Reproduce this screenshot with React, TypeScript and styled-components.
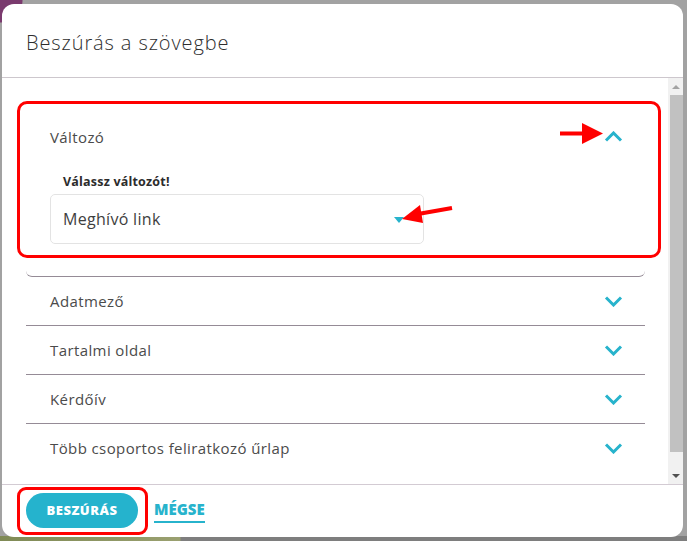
import React from "react";
import styled, { createGlobalStyle } from "styled-components";

const GlobalStyle = createGlobalStyle`
  html, body { margin: 0; padding: 0; }
  body { background: #a0a0a0; font-family: "Open Sans", "Liberation Sans", sans-serif; }
  * { box-sizing: border-box; }
`;

const TEAL = "#27b3cc";
const LINE = "#958b96";

const Backdrop = styled.div`
  width: 687px;
  height: 541px;
  padding: 4px 4px 4px 2px;
  background:
    radial-gradient(circle at 0 0, #7a3a6e 0 22px, transparent 23px),
    linear-gradient(to right, #7f8a55 0, #9aa070 180px, #7e7e7e 181px) bottom / 100% 5px no-repeat,
    #a2a2a2;
  overflow: hidden;
`;

const Modal = styled.div`
  width: 681px;
  height: 533px;
  background: #fff;
  border-radius: 12px;
  display: flex;
  flex-direction: column;
  overflow: hidden;
`;

const Header = styled.div`
  height: 74px;
  flex: none;
  display: flex;
  align-items: center;
  padding: 3px 0 0 24px;
  border-bottom: 1px solid #cdc7cd;
`;

const Title = styled.h2`
  margin: 0;
  font-size: 20px;
  font-weight: 300;
  color: #2e2e2e;
  letter-spacing: 0.9px;
`;

const Body = styled.div`
  flex: 1;
  display: flex;
  min-height: 0;
`;

const Content = styled.div`
  flex: 1;
  padding: 39px 23px 0 24px;
  display: flex;
  flex-direction: column;
`;

const Scrollbar = styled.div`
  width: 15px;
  flex: none;
  background: #f1f1f1;
  display: flex;
  flex-direction: column;
  align-items: flex-end;
`;

const ScrollArrow = styled.div<{ $down?: boolean }>`
  width: 15px;
  height: 17px;
  display: flex;
  align-items: center;
  justify-content: center;
  &::before {
    content: "";
    border-left: 4px solid transparent;
    border-right: 4px solid transparent;
    ${(p) =>
      p.$down
        ? `border-top: 4px solid #505050;`
        : `border-bottom: 4px solid #a3a3a3;`}
  }
`;

const Thumb = styled.div`
  width: 13px;
  height: 357px;
  background: #c1c1c1;
`;

const ScrollSpace = styled.div`
  flex: 1;
`;

const ExpandedItem = styled.div`
  position: relative;
  padding: 0 22px 32px 24px;
  border-bottom: 1px solid ${LINE};
  border-radius: 0 0 6px 6px;
`;

const Row = styled.div<{ $last?: boolean }>`
  height: 49px;
  display: flex;
  align-items: center;
  justify-content: space-between;
  padding: 0 22px 0 24px;
  border-bottom: 1px solid ${(p) => (p.$last ? "transparent" : LINE)};
`;

const ExpandedHead = styled.div`
  height: 59px;
  display: flex;
  align-items: center;
  justify-content: space-between;
  margin-top: -10px;
`;

const RowLabel = styled.span`
  font-size: 15px;
  font-weight: 400;
  color: #4b4b4b;
  letter-spacing: 0.4px;
`;

const FieldLabel = styled.div`
  font-size: 12.5px;
  font-weight: 700;
  color: #2c2c2c;
  padding-left: 13px;
  line-height: 18px;
  margin-top: 7px;
  letter-spacing: 0.2px;
`;

const Select = styled.div`
  margin-top: 3px;
  width: 374px;
  height: 50px;
  border: 1px solid #e3e3e3;
  border-radius: 5px;
  display: flex;
  align-items: center;
  justify-content: space-between;
  padding: 0 19px 0 12px;
`;

const SelectValue = styled.span`
  font-size: 16px;
  color: #3e3e3e;
  letter-spacing: 0.3px;
`;

const Caret = styled.span`
  width: 0;
  height: 0;
  border-left: 5px solid transparent;
  border-right: 5px solid transparent;
  border-top: 6px solid ${TEAL};
  margin-top: 2px;
`;

const Footer = styled.div`
  height: 53px;
  flex: none;
  border-top: 1px solid #d3cbd3;
  display: flex;
  align-items: center;
  gap: 16px;
  padding: 0 0 2px 24px;
`;

const PrimaryButton = styled.button`
  position: relative;
  width: 112px;
  height: 35px;
  border: none;
  border-radius: 18px;
  background: #25b3cd;
  color: #fff;
  font-family: inherit;
  font-size: 13px;
  font-weight: 800;
  letter-spacing: 0.5px;
  cursor: pointer;
`;

const LinkButton = styled.button`
  background: none;
  border: none;
  border-bottom: 2px solid ${TEAL};
  padding: 0 0 2px;
  margin-top: 2px;
  color: ${TEAL};
  font-family: inherit;
  font-size: 15px;
  font-weight: 800;
  cursor: pointer;
`;

const Highlight = styled.div<{ $radius: number }>`
  position: absolute;
  border: 3px solid #ff0000;
  border-radius: ${(p) => p.$radius}px;
  pointer-events: none;
`;

const AccordionHighlight = styled(Highlight)`
  left: -9px;
  right: -16px;
  top: -16px;
  bottom: 18px;
`;

const ButtonHighlight = styled(Highlight)`
  left: -9px;
  right: -10px;
  top: -6px;
  bottom: -7px;
`;

const ArrowSvg = styled.svg<{ $left: number; $top: number }>`
  position: absolute;
  left: ${(p) => p.$left}px;
  top: ${(p) => p.$top}px;
  overflow: visible;
  pointer-events: none;
`;

const Chevron = ({ up }: { up?: boolean }) => (
  <svg width="19" height="11" viewBox="0 0 19 11">
    <polyline
      points={up ? "2,9.5 9.5,2 17,9.5" : "2,1.5 9.5,9 17,1.5"}
      fill="none"
      stroke={TEAL}
      strokeWidth="3"
    />
  </svg>
);

const rows = ["Adatmező", "Tartalmi oldal", "Kérdőív", "Több csoportos feliratkozó űrlap"];

export default function App() {
  return (
    <>
      <GlobalStyle />
      <Backdrop>
        <Modal>
          <Header>
            <Title>Beszúrás a szövegbe</Title>
          </Header>
          <Body>
            <Content>
              <ExpandedItem>
                <ExpandedHead>
                  <RowLabel>Változó</RowLabel>
                  <Chevron up />
                </ExpandedHead>
                <FieldLabel>Válassz változót!</FieldLabel>
                <Select>
                  <SelectValue>Meghívó link</SelectValue>
                  <Caret />
                </Select>
                <AccordionHighlight $radius={10} />
                <ArrowSvg $left={534} $top={6} width="44" height="21" viewBox="0 0 44 21">
                  <rect x="0" y="8.5" width="24" height="4" fill="#ff0000" />
                  <polygon points="22,0 43,10.5 22,21" fill="#ff0000" />
                </ArrowSvg>
                <ArrowSvg $left={372} $top={86} width="56" height="24" viewBox="0 0 56 24">
                  <line x1="54" y1="5" x2="20" y2="11" stroke="#ff0000" strokeWidth="4" />
                  <polygon points="4,16 22,2 25,20" fill="#ff0000" />
                </ArrowSvg>
              </ExpandedItem>
              {rows.map((r, i) => (
                <Row key={r} $last={i === rows.length - 1}>
                  <RowLabel>{r}</RowLabel>
                  <Chevron />
                </Row>
              ))}
            </Content>
            <Scrollbar>
              <ScrollArrow />
              <Thumb />
              <ScrollSpace />
              <ScrollArrow $down />
            </Scrollbar>
          </Body>
          <Footer>
            <PrimaryButton>
              BESZÚRÁS
              <ButtonHighlight $radius={9} />
            </PrimaryButton>
            <LinkButton>MÉGSE</LinkButton>
          </Footer>
        </Modal>
      </Backdrop>
    </>
  );
}
